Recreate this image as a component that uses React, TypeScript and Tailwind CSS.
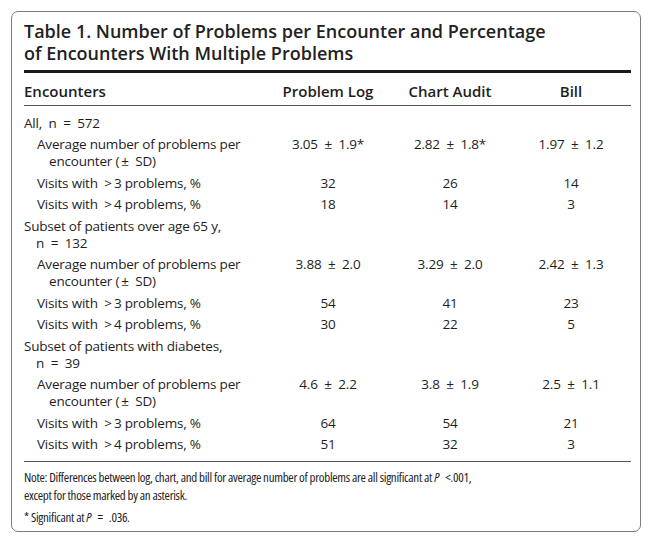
import React from "react";

type Row = {
  group?: boolean;
  lines: string[];
  values?: [string, string, string];
};

const E = "\u2002"; // en space, the source sets wide gaps around = and ±
const T = "\u2009";

const avg = ["Average number of problems per", `encounter (${T}±${E}SD)`];
const over3 = [`Visits with${E}>${T}3 problems, %`];
const over4 = [`Visits with${E}>${T}4 problems, %`];
const pm = (a: string, b: string) => `${a}${E}±${E}${b}`;

const rows: Row[] = [
  { group: true, lines: [`All,${E}n${E}=${E}572`] },
  { lines: avg, values: [pm("3.05", "1.9*"), pm("2.82", "1.8*"), pm("1.97", "1.2")] },
  { lines: over3, values: ["32", "26", "14"] },
  { lines: over4, values: ["18", "14", "3"] },
  { group: true, lines: ["Subset of patients over age 65 y,", `n${E}=${E}132`] },
  { lines: avg, values: [pm("3.88", "2.0"), pm("3.29", "2.0"), pm("2.42", "1.3")] },
  { lines: over3, values: ["54", "41", "23"] },
  { lines: over4, values: ["30", "22", "5"] },
  { group: true, lines: ["Subset of patients with diabetes,", `n${E}=${E}39`] },
  { lines: avg, values: [pm("4.6", "2.2"), pm("3.8", "1.9"), pm("2.5", "1.1")] },
  { lines: over3, values: ["64", "54", "21"] },
  { lines: over4, values: ["51", "32", "3"] },
];

export default function App() {
  return (
    <div className="h-[546px] w-[652px] bg-white pl-[11px] pt-[11px] font-['Open_Sans','Liberation_Sans',sans-serif] text-[#1e1e1e]">
      <div className="flex h-[521px] w-[630px] flex-col rounded-[7px] border border-[#7c7c7c] pl-[12px] pr-[9px] pt-[8px]">
        <h1 className="text-[18px] font-semibold leading-[22px] text-[#222]">
          Table 1. Number of Problems per Encounter and Percentage
          <br />
          of Encounters With Multiple Problems
        </h1>

        <div className="mt-[6px] h-[3px] bg-[#1a1a1a]" />

        <div className="grid grid-cols-[243px_122px_122px_120px] border-b border-[#555] pb-[4px] pt-[8px] text-[15px] font-semibold leading-[20px]">
          <div>Encounters</div>
          <div className="text-center">Problem Log</div>
          <div className="text-center">Chart Audit</div>
          <div className="text-center">Bill</div>
        </div>

        <div className="border-b border-[#555] py-[6px] text-[13.5px] leading-[17px] tracking-[-0.2px]">
          {rows.map((r, i) => (
            <div key={i} className="grid grid-cols-[243px_122px_122px_120px] pb-[2px] pt-[2.5px]">
              <div className={r.group ? "" : "pl-[13px]"}>
                {r.lines.map((l, k) => (
                  <div key={k} className={k > 0 ? "pl-[12px]" : ""}>
                    {l}
                  </div>
                ))}
              </div>
              {r.values?.map((v, j) => (
                <div key={j} className="text-center">
                  {v}
                </div>
              ))}
            </div>
          ))}
        </div>

        <div className="pt-[6px] text-[13px] leading-[18px] tracking-[-0.3px] font-stretch-condensed">
          <p>
            Note: Differences between log, chart, and bill for average number of problems are all significant at{" "}
            <i>P</i>
            {E}&lt;.001,
            <br />
            except for those marked by an asterisk.
          </p>
          <p className="mt-[4px]">
            * Significant at <i>P</i>
            {E}={E}.036.
          </p>
        </div>
      </div>
    </div>
  );
}
